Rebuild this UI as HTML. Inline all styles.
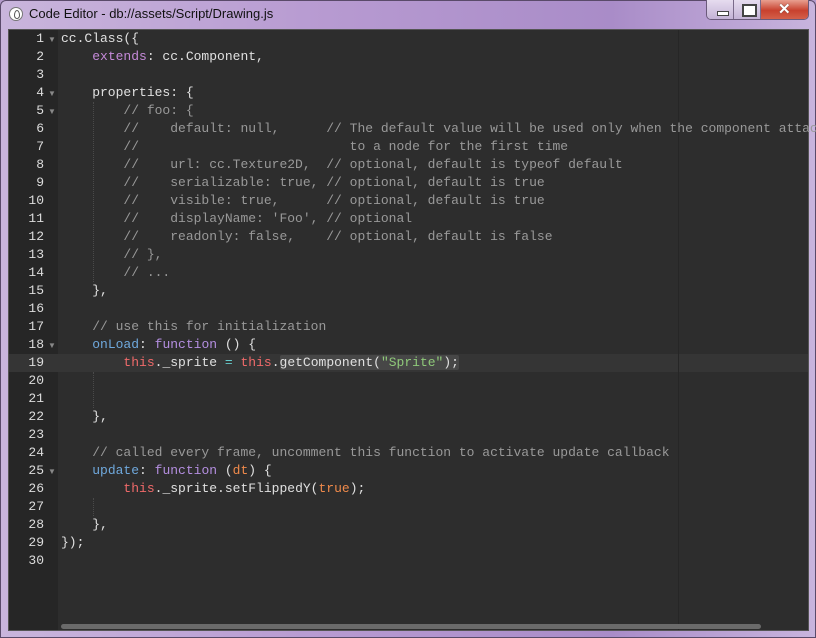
<!DOCTYPE html>
<html><head><meta charset="utf-8"><style>
*{margin:0;padding:0;box-sizing:border-box}
body{width:816px;height:638px;overflow:hidden;background:#b49bcc;font-family:"Liberation Sans",sans-serif;position:relative}
.frame{position:absolute;left:0;top:0;width:816px;height:638px;background:linear-gradient(90deg,#c9b5dc 0%,#b79ad1 40%,#a98cc8 75%,#c8b4dd 100%);border:1px solid #5a4a6a;border-radius:6px 6px 0 0}
.title{position:absolute;left:29px;top:6px;font-size:13px;color:#111}
.ico{position:absolute;left:9px;top:7px;width:14px;height:14px;border-radius:50%;background:#fff;border:1px solid #777}
.ico:after{content:"";position:absolute;left:4px;top:2px;width:4px;height:7px;border:1px solid #555;border-radius:50% 50% 50% 50%/60% 60% 40% 40%}
.btns{position:absolute;left:706px;top:0;height:20px;width:103px;border:1px solid #6a5a7a;border-top:none;border-radius:0 0 5px 5px;overflow:hidden;display:flex}
.b{height:19px;background:linear-gradient(#e6dcef,#c4b3d6);border-right:1px solid #7a6a8a;position:relative}
.b1{width:28px}.b2{width:27px}.b3{width:48px;background:linear-gradient(#e8a090,#c8412e 55%,#d4604a);border:none}
.b1:after{content:"";position:absolute;left:10px;top:11px;width:10px;height:3px;background:#fff;border:1px solid #444}
.b2:after{content:"";position:absolute;left:8px;top:4px;width:11px;height:9px;border:2px solid #444;background:#fff;box-shadow:inset 0 0 0 2px #fff}
.b3 span{position:absolute;left:17px;top:0;color:#fff;font-weight:bold;font-size:15px;text-shadow:0 0 1px #333}
.ed{position:absolute;left:8px;top:29px;width:801px;height:602px;background:#2d2d2d;border:1px solid #555}
.gut{position:absolute;left:0;top:0;width:49px;height:100%;background:#262626}
.pm{position:absolute;left:669px;top:0;width:1px;height:100%;background:#262626}
.hl{position:absolute;left:0;top:324px;width:799px;height:18px;background:#353535}
.gut .hlg{position:absolute;left:0;top:324px;width:49px;height:18px;background:#303030}
.ln{position:absolute;left:0;top:0;width:49px;font-family:"Liberation Mono",monospace;font-size:13px;line-height:18px;color:#ddd;text-align:right;padding-right:14px}
.fold{position:absolute;left:39px;font-size:8px;color:#888}
pre{position:absolute;left:52px;top:0;font-family:"Liberation Mono",monospace;font-size:13px;line-height:18px;color:#e0e0e0}
.c{color:#999}.k{color:#c58ad9}.f{color:#b48ee0}.p{color:#6fa8dc}.t{color:#f06a6a}.s{color:#8fc97a}.n{color:#f08a4b}.o{color:#66cccc}
.sel{background:#474747;border-radius:2px}
.guide{position:absolute;width:0;border-left:1px dotted #4a4a4a}
.sb{position:absolute;left:52px;top:594px;width:700px;height:5px;border-radius:3px;background:#6a6a6a}
</style></head><body>
<div class="frame"></div>
<div class="ico"></div>
<div class="title">Code Editor - db://assets/Script/Drawing.js</div>
<div class="btns"><div class="b b1"></div><div class="b b2"></div><div class="b b3"><span>✕</span></div></div>
<div class="ed">
<div class="gut"><div class="hlg"></div></div>
<div class="hl"></div>
<div class="pm"></div>
<div class="guide" style="left:84px;top:72px;height:180px"></div>
<div class="guide" style="left:84px;top:342px;height:36px"></div>
<div class="guide" style="left:84px;top:468px;height:18px"></div>
<div class="ln">1<br>2<br>3<br>4<br>5<br>6<br>7<br>8<br>9<br>10<br>11<br>12<br>13<br>14<br>15<br>16<br>17<br>18<br>19<br>20<br>21<br>22<br>23<br>24<br>25<br>26<br>27<br>28<br>29<br>30</div>
<span class="fold" style="top:5px">▼</span><span class="fold" style="top:59px">▼</span><span class="fold" style="top:77px">▼</span><span class="fold" style="top:311px">▼</span><span class="fold" style="top:437px">▼</span>
<pre>cc.Class({
    <span class="k">extends</span>: cc.Component,

    properties: {
        <span class="c">// foo: {</span>
        <span class="c">//    default: null,      // The default value will be used only when the component attac</span>
        <span class="c">//                           to a node for the first time</span>
        <span class="c">//    url: cc.Texture2D,  // optional, default is typeof default</span>
        <span class="c">//    serializable: true, // optional, default is true</span>
        <span class="c">//    visible: true,      // optional, default is true</span>
        <span class="c">//    displayName: 'Foo', // optional</span>
        <span class="c">//    readonly: false,    // optional, default is false</span>
        <span class="c">// },</span>
        <span class="c">// ...</span>
    },

    <span class="c">// use this for initialization</span>
    <span class="p">onLoad</span>: <span class="f">function</span> () {
        <span class="t">this</span>._sprite <span class="o">=</span> <span class="t">this</span>.<span class="sel">getComponent(<span class="s">"Sprite"</span>);</span>


    },

    <span class="c">// called every frame, uncomment this function to activate update callback</span>
    <span class="p">update</span>: <span class="f">function</span> (<span class="n">dt</span>) {
        <span class="t">this</span>._sprite.setFlippedY(<span class="n">true</span>);

    },
});
</pre>
<div class="sb"></div>
</div>
</body></html>
